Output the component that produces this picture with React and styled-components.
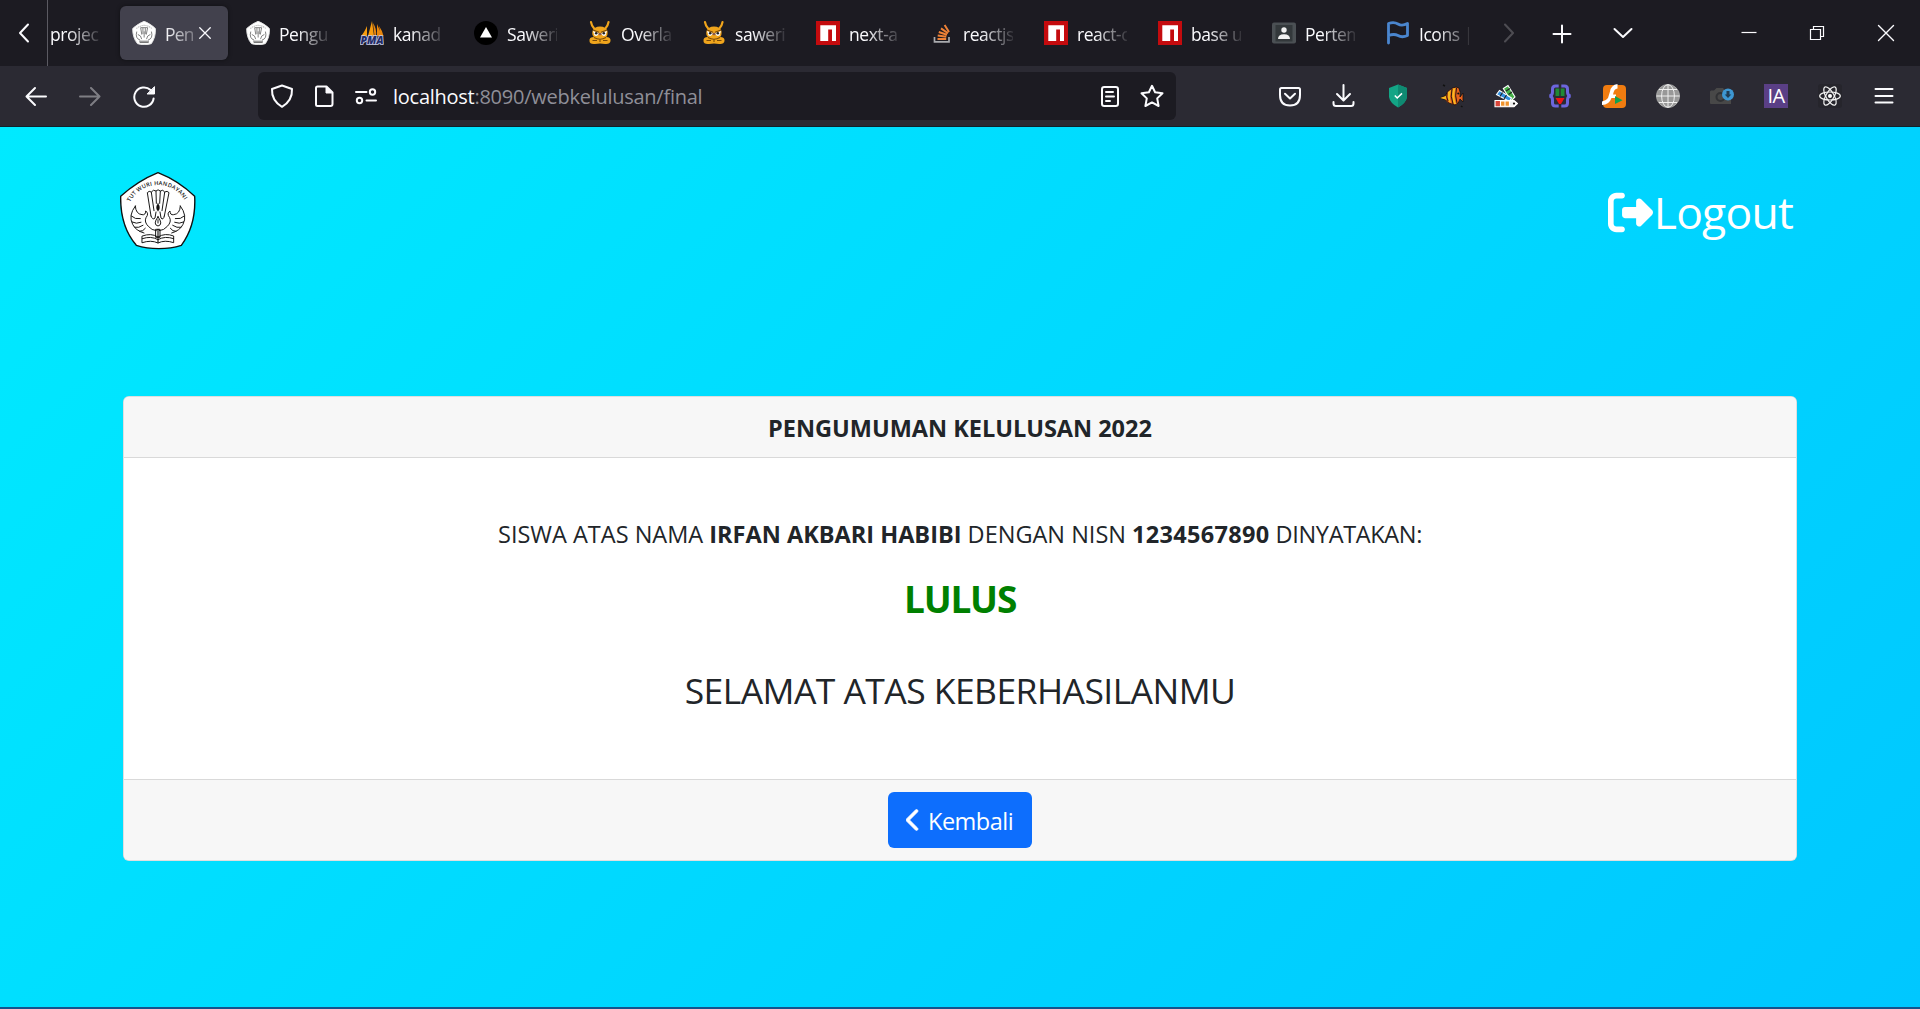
import React from "react";
import styled, { createGlobalStyle } from "styled-components";
import { FaRightFromBracket, FaChevronLeft } from "react-icons/fa6";

const GlobalStyle = createGlobalStyle`
  * { box-sizing: border-box; }
  html, body { margin: 0; padding: 0; overflow: hidden; }
  body { font-family: "Open Sans", "Noto Sans", sans-serif; }
  svg { display: block; flex: none; }
`;

const Screen = styled.div`
  display: flex;
  flex-direction: column;
  width: 1920px;
  height: 1009px;
  border-bottom: 2px solid #14538c;
`;

/* ---------- browser chrome ---------- */

const TabBar = styled.div`
  display: flex;
  height: 66px;
  background: #1c1b22;
  color: #fbfbfe;
`;

const ChromeButton = styled.div`
  display: flex;
  align-items: center;
  justify-content: center;
  flex: none;
  width: ${(p) => p.$w}px;
  height: 66px;
  opacity: ${(p) => (p.$dim ? 0.22 : 1)};
  border-right: ${(p) => (p.$divider ? "1px solid #5b5a62" : "none")};
`;

const Tabs = styled.div`
  display: flex;
  gap: 6px;
  padding: 6px 0;
  flex: none;
`;

const Tab = styled.div`
  display: flex;
  align-items: center;
  width: ${(p) => (p.$cut ? 66 : 108)}px;
  height: 54px;
  padding-left: ${(p) => (p.$cut ? 2 : 12)}px;
  border-radius: 6px;
  background: ${(p) => (p.$active ? "#42414d" : "transparent")};
  box-shadow: ${(p) => (p.$active ? "0 0 4px rgba(0,0,0,0.45)" : "none")};
`;

const Favicon = styled.div`
  width: 24px;
  height: 24px;
  margin-right: 9px;
  flex: none;
`;

const TabTitle = styled.span`
  width: ${(p) => (p.$active ? 28 : 50)}px;
  flex: none;
  overflow: hidden;
  white-space: nowrap;
  font-size: 17.5px;
  line-height: 26px;
  letter-spacing: ${(p) => (p.$active ? -0.8 : -0.45)}px;
  padding-top: 1px;
  mask-image: linear-gradient(to right, #000 ${(p) => (p.$active ? "0%" : "35%")}, transparent ${(p) => (p.$active ? "150%" : "108%")});
`;

const TabClose = styled.div`
  margin-left: 6px;
`;

const Spacer = styled.div`
  flex: 1;
`;

const NavBar = styled.div`
  display: flex;
  align-items: center;
  height: 61px;
  padding-bottom: 1px;
  background: #2b2a33;
  border-bottom: 1px solid #10222c;
  color: #fbfbfe;
`;

const NavButton = styled.div`
  display: flex;
  align-items: center;
  justify-content: center;
  width: 54px;
  height: 48px;
  flex: none;
  opacity: ${(p) => (p.$dim ? 0.4 : 1)};
`;

const NavGroup = styled.div`
  display: flex;
  width: ${(p) => p.$w}px;
  padding-left: ${(p) => p.$pad || 0}px;
  flex: none;
`;

const UrlBar = styled.div`
  display: flex;
  align-items: center;
  width: 918px;
  height: 48px;
  border-radius: 6px;
  background: #1c1b22;
  padding: 0 3px;
`;

const UrlIcon = styled.div`
  display: flex;
  justify-content: center;
  width: 42px;
  flex: none;
`;

const UrlText = styled.div`
  flex: 1;
  padding: 3px 0 0 6px;
  font-size: 20px;
  line-height: 30px;
  letter-spacing: -0.26px;
  color: #8f8f98;
  white-space: nowrap;
  b { font-weight: 400; color: #fbfbfe; }
`;

/* ---------- page ---------- */

const Page = styled.main`
  flex: 1;
  background: linear-gradient(135deg, #00eaff 0%, #00c7ff 100%);
  color: #212529;
`;

const Header = styled.header`
  display: flex;
  justify-content: space-between;
  height: 269px;
  padding: 45px 127px 0 120px;
`;

const Logout = styled.a`
  display: flex;
  align-items: center;
  height: 80px;
  color: #fff;
  font-size: 44.5px;
  line-height: 60px;
  svg { width: 45px; height: 45px; }
  span { margin-left: 1px; letter-spacing: -0.8px; }
`;

const Card = styled.section`
  width: 1674px;
  height: 465px;
  margin: 0 auto;
  display: flex;
  flex-direction: column;
  border: 1px solid rgba(0, 0, 0, 0.125);
  border-radius: 6px;
  background: #fff;
  background-clip: border-box;
  overflow: hidden;
  text-align: center;
`;

const CardHeader = styled.h5`
  margin: 0;
  height: 61px;
  background: #f7f7f7;
  border-bottom: 1px solid #d9d9d9;
  font-size: 23.5px;
  font-weight: 700;
  line-height: 62px;
  letter-spacing: -0.02px;
`;

const CardBody = styled.div`
  flex: 1;
  display: flex;
  flex-direction: column;
  align-items: center;
  padding-top: 58px;
`;

const Line = styled.p`
  margin: 0;
  font-size: ${(p) => p.$size}px;
  line-height: ${(p) => p.$lh}px;
  font-weight: ${(p) => (p.$bold ? 700 : 400)};
  color: ${(p) => p.$color || "inherit"};
  letter-spacing: ${(p) => p.$ls || 0}px;
  margin-top: ${(p) => p.$mt || 0}px;
  white-space: nowrap;
`;

const Strong = styled.b`
  letter-spacing: ${(p) => p.$ls || 0}px;
`;

const Verdict = styled.span`
  letter-spacing: -0.35px;
`;

const CardFooter = styled.div`
  display: flex;
  justify-content: center;
  height: 81px;
  padding-top: 12px;
  background: #f7f7f7;
  border-top: 1px solid #d9d9d9;
`;

const BackButton = styled.button`
  display: flex;
  align-items: center;
  width: 144px;
  height: 56px;
  padding: 0 0 0 18px;
  border: 0;
  border-radius: 6px;
  background: #0d6efd;
  color: #fff;
  font-family: inherit;
  font-size: 23.5px;
  line-height: 36px;
  svg { width: 15px; height: 24px; stroke: #fff; stroke-width: 14; }
  span { margin-left: 7px; padding-top: 2px; letter-spacing: -0.5px; }
`;

/* ---------- drawings ---------- */

const Icon = ({ children, size = 24, sw = 2, ...rest }) => (
  <svg width={size} height={size} viewBox="0 0 24 24" fill="none" stroke="currentColor" strokeWidth={sw} strokeLinecap="round" strokeLinejoin="round" {...rest}>
    {children}
  </svg>
);

const PENTAGON = "M174 52 C137 67 94 94 62 123 C61 178 76 232 109 270 C150 283 203 283 244 270 C272 232 287 178 284 123 C254 94 212 67 174 52Z";

const Emblem = () => (
  <svg width="76" height="78" viewBox="60 50 228 234" fill="none" stroke="#111" strokeWidth="2.9" strokeLinecap="round" strokeLinejoin="round">
    <path d={PENTAGON} fill="#fff" strokeWidth="4.2" />
    <path id="motto" d="M90 140 A94 94 0 0 1 258 142" stroke="none" />
    <text fontFamily="Open Sans, sans-serif" fontSize="17" fontWeight="600" fill="#222" stroke="none">
      <textPath href="#motto" textLength="198">TUT WURI HANDAYANI</textPath>
    </text>
    <path d="M153 182 L142 112 Q147 105 154 110 Q160 101 168 107 Q174 100 181 107 Q189 101 194 110 Q202 105 207 112 L193 182" />
    <path d="M154 111 L162 166 M168 108 L169 144 M181 108 L179 144 M194 111 L186 166" />
    <path d="M174 144 Q165 158 174 168 Q183 158 174 144Z" fill="#111" strokeWidth="1" />
    <path d="M153 182 Q158 196 165 188 L168 170 M193 182 Q190 196 183 188 L180 170" />
    <path d="M174 184 Q157 208 174 212 Q191 208 174 184Z M174 193 V203" />
    <path d="M106 152 Q84 181 98 207 Q107 226 132 233 M106 152 Q107 176 126 178 Q137 180 137 167 Q148 174 138 187 Q132 200 145 213 Q155 225 169 226" />
    <path d="M241 152 Q263 181 249 207 Q240 226 215 233 M241 152 Q240 176 221 178 Q210 180 210 167 Q199 174 209 187 Q215 200 202 213 Q192 225 178 226" />
    <path d="M94 182 Q105 193 121 190 M96 200 Q109 207 123 201 M104 216 Q116 219 129 210 M119 228 Q129 229 136 219" />
    <path d="M253 182 Q242 193 226 190 M251 200 Q238 207 224 201 M243 216 Q231 219 218 210 M228 228 Q218 229 211 219" />
    <path d="M127 242 Q153 232 174 245 Q195 232 221 242 V262 Q194 253 174 263 Q153 253 127 262Z M127 250 Q153 241 174 253 Q195 241 221 250 M168 222 H180 V246 H168Z" />
    <path d="M174 222 V262" strokeWidth="3.4" />
  </svg>
);

const SchoolFavicon = () => (
  <svg width="24" height="24" viewBox="57 49 231 234" fill="none" stroke="#777" strokeWidth="9">
    <path d={PENTAGON} fill="#fff" stroke="#e8e8e8" />
    <path d="M98 122 Q174 62 250 122" stroke="#bbb" strokeWidth="11" strokeDasharray="12 7" />
    <path d="M151 182 L140 114 H208 L194 182 M162 116 V176 M185 116 V176 M174 150 V210" />
    <path d="M102 152 Q84 220 135 235 M245 152 Q263 220 212 235 M112 180 Q145 188 150 226 M235 180 Q202 188 197 226" />
    <path d="M126 246 H221 M130 259 H218" stroke="#666" />
  </svg>
);

const PmaFavicon = () => (
  <svg width="24" height="24" viewBox="0 0 24 24">
    <path d="M1 15 Q4 12 7 5 L7 15Z M8 15 L12 0 L14 15Z" fill="#f89c0e" />
    <path d="M13 2 Q17 8 16 15 H14.5Z M17 3 L20 10 L19 5 Q22 9 23.5 15 H17Z" fill="#e8860c" />
    <text x="0.5" y="23.3" fontFamily="Open Sans, sans-serif" fontSize="10" fontStyle="italic" fontWeight="800" fill="#232c66" stroke="#c9cdea" strokeWidth="1.6" paintOrder="stroke" textLength="23" lengthAdjust="spacingAndGlyphs">PMA</text>
  </svg>
);

const VercelFavicon = () => (
  <svg width="24" height="24" viewBox="0 0 24 24">
    <circle cx="12" cy="12" r="12" fill="#000" />
    <path d="M12 6 L18 16.5 H6Z" fill="#fff" />
  </svg>
);

const BearFavicon = () => (
  <svg width="24" height="24" viewBox="0 0 24 24">
    <path d="M3 1.2 Q3.5 5 6.5 8 M20.5 1.2 Q20 5 17 8" stroke="#f0a51c" strokeWidth="2.2" strokeLinecap="round" fill="none" />
    <path d="M12 5.5 Q18 5.5 19.5 10 Q20 15 18 16 Q23 16 22.5 20 Q22 23.5 17 23 Q12 22 7 23 Q1.5 23.5 1.5 20 Q1 16 6 16 Q3.5 14 4.5 10 Q6 5.5 12 5.5Z" fill="#f0a51c" />
    <path d="M5 10 L11 12 Q10 16 6.5 14.5Z M19 10 L13 12 Q14 16 17.5 14.5Z" fill="#fff" />
    <circle cx="8.2" cy="12.3" r="1.3" fill="#222" />
    <circle cx="15.8" cy="12.3" r="1.3" fill="#222" />
    <path d="M5 9 L11 11.2 M19 9 L13 11.2 M6 16.5 Q12 20 18 16.5 M4.5 19.5 H9 M15 19.5 H19.5 M12 18 V21" stroke="#7a4a08" strokeWidth="1.1" fill="none" />
    <ellipse cx="12" cy="13" rx="1.6" ry="1.3" fill="#8a5a4a" />
  </svg>
);

const NpmFavicon = () => (
  <svg width="24" height="24" viewBox="0 0 24 24">
    <rect width="24" height="24" fill="#c40b0e" />
    <path d="M4.3 4.3 H20 V20 H16 V8.5 H12.2 V20 H4.3Z" fill="#fff" />
  </svg>
);

const StackFavicon = () => (
  <svg width="24" height="24" viewBox="0 0 24 24" fill="none">
    <path d="M4.5 16 V20.8 H19 V16" stroke="#a9abae" strokeWidth="1.7" />
    <path d="M7.5 18 H16.2 M7.7 14.6 L16.3 15.8 M8.8 11 L17 13.8 M11 7.4 L18 12.3 M14.6 4 L19 11" stroke="#ef8236" strokeWidth="2" />
  </svg>
);

const ContactFavicon = () => (
  <svg width="24" height="24" viewBox="0 0 24 24">
    <rect x="0" y="1.5" width="24" height="21" rx="2" fill="#4b5054" />
    <rect x="3.5" y="4" width="17" height="16.5" fill="#33383b" />
    <circle cx="12" cy="9" r="2.7" fill="#f1f1f1" />
    <path d="M6 18 Q6 13.2 12 13.2 Q18 13.2 18 18Z" fill="#f1f1f1" />
  </svg>
);

const FlagFavicon = () => (
  <svg width="24" height="24" viewBox="0 0 24 24" fill="none" stroke="#4a86cf" strokeWidth="2.8" strokeLinejoin="round" strokeLinecap="round">
    <path d="M2.5 22 V2.5 Q8 .5 12 3 Q16 5.5 21.5 2.5 V14.5 Q16 17 12 14.5 Q8 12.5 2.5 14.5" />
  </svg>
);

const AdguardIcon = () => (
  <svg width="24" height="24" viewBox="0 0 24 24">
    <path d="M12 .5 L21 4 V13 Q20 19 12 23.5 Q4 19 3 13 V4Z" fill="#13a586" />
    <path d="M12 .5 L21 4 V13 Q20 19 12 23.5Z" fill="#0f8a72" />
    <path d="M8.8 11.5 L11.2 14 L16 9.4" fill="none" stroke="#fff" strokeWidth="1.5" />
  </svg>
);

const FishIcon = () => (
  <svg width="24" height="24" viewBox="0 0 24 24">
    <path d="M0 14 L5 12 Q9 4 16 3 L19 4 Q21 9 20 13 L23 9 V18 L20 15 Q19 20 15 21 Q8 20 5 15.5Z" fill="#e8601c" stroke="#111" strokeWidth=".8" />
    <path d="M0 14 L6 12 V15.5Z M8 8 Q7 13 9 18 L11 19 Q9 13 11 6Z M13 4.5 Q11 12 14 20 L16 20 Q13 12 15.5 4Z" fill="#f9b91f" />
    <path d="M7 9 Q6 13 8 17 M12 5 Q10 12 13 20 M16.5 4 Q14.5 12 17 19" stroke="#111" strokeWidth=".9" fill="none" />
    <circle cx="18.3" cy="9.5" r="1.1" fill="#111" />
    <path d="M3 1 L5 2 M21 22 L22.5 23" stroke="#111" strokeWidth="1.5" />
  </svg>
);

const PaletteIcon = () => (
  <svg width="24" height="24" viewBox="0 0 24 24" stroke="#fff" strokeWidth="1.1">
    <path d="M9.3 4.5 L14 1.5 L21 13 L17 17Z" fill="#43b047" />
    <path d="M2.5 10.5 L5.5 6.5 L17.5 14 L15.5 17.5Z" fill="#2f8fe0" />
    <path d="M1 16.5 H20 L23.5 19.5 L20 22.8 H1Z" fill="#d9463a" />
    <path d="M6.5 17 H11 V22.2 H6.5Z M11 17 H15.5 V22.2 H11Z" fill="#f0922b" />
    <path d="M15.5 17 H20 L23 19.5 L20 22.2 H15.5Z" fill="#eee" />
    <circle cx="20" cy="19.6" r="1.1" fill="#111" stroke="none" />
    <path d="M12 7 L16 4.5 M14.5 10.5 L18 8 M6 12.5 L8.5 8.5 M10 15 L12.5 11" stroke="#222" />
  </svg>
);

const BracesIcon = () => (
  <svg width="24" height="24" viewBox="0 0 24 24" fill="none">
    <path d="M10.7 2 H7.5 Q4.5 2 4.5 5 V8 Q4.5 11.5 1.5 12 Q4.5 12.5 4.5 16 V19 Q4.5 22 7.5 22 H10.7 M13.3 2 H16.5 Q19.5 2 19.5 5 V8 Q19.5 11.5 22.5 12 Q19.5 12.5 19.5 16 V19 Q19.5 22 16.5 22 H13.3" stroke="#6c66dd" strokeWidth="3" />
    <path d="M7.5 4.5 H11.3 V12 H7.5Z M12.7 4.5 H16.5 V12 H12.7Z" fill="#1f8a35" />
    <path d="M7.5 14 H16.5 L13 20 H11Z" fill="#ef1414" />
  </svg>
);

const FlashIcon = () => (
  <svg width="24" height="24" viewBox="0 0 24 24">
    <rect x="1" y="1" width="23" height="23" rx="4" fill="#f07c10" />
    <path d="M15.5 0 Q9 1 8 7.5 L6 14 Q4 17 0 17.5 V21 Q7 21 9.5 14 H14 V10.5 H11 Q12 4.5 15.5 4.5Z" fill="#fff" />
    <path d="M13 12 L20.5 16.2 L13 20Z" fill="#12a150" />
  </svg>
);

const GlobeIcon = () => (
  <svg width="24" height="24" viewBox="0 0 24 24" fill="none" stroke="#efefef" strokeWidth="1">
    <circle cx="12" cy="12" r="11.5" fill="#989898" stroke="#a6a6a6" />
    <ellipse cx="12" cy="12" rx="6.4" ry="11.3" />
    <path d="M12 .5 V23.5 M.5 12 H23.5 M3 5.5 H21 M3 18.5 H21" />
  </svg>
);

const CameraIcon = () => (
  <svg width="24" height="24" viewBox="0 0 24 24">
    <path d="M1 6.5 H4 L6.5 4 H13 L15 6.5 H21 V20 H1 Q0 20 0 19 V7.5Z" fill="#484848" />
    <circle cx="10.5" cy="13" r="4" fill="none" stroke="#303134" strokeWidth="2" />
    <circle cx="18" cy="10.5" r="6" fill="#3d97d3" />
    <path d="M16.5 7 H19.5 V10.5 H21.3 L18 14 L14.7 10.5 H16.5Z" fill="#1f3d55" />
  </svg>
);

const IaBadge = styled.div`
  width: 24px;
  height: 24px;
  background: #5a3f86;
  color: #fff;
  font-size: 20px;
  line-height: 24px;
  text-align: center;
  letter-spacing: -0.6px;
`;

const ReactIcon = () => (
  <svg width="24" height="24" viewBox="0 0 24 24" fill="none" stroke="#f4f4f4" strokeWidth="1.2">
    <rect width="24" height="24" rx="3" fill="#26252c" stroke="none" />
    <ellipse cx="12" cy="12" rx="10.3" ry="4" />
    <ellipse cx="12" cy="12" rx="10.3" ry="4" transform="rotate(60 12 12)" />
    <ellipse cx="12" cy="12" rx="10.3" ry="4" transform="rotate(120 12 12)" />
    <circle cx="12" cy="12" r="2" fill="#fff" stroke="none" />
  </svg>
);

const TABS = [
  { title: "Pen", icon: SchoolFavicon, active: true },
  { title: "Pengu", icon: SchoolFavicon },
  { title: "kanad", icon: PmaFavicon },
  { title: "Saweri", icon: VercelFavicon },
  { title: "Overla", icon: BearFavicon },
  { title: "saweri", icon: BearFavicon },
  { title: "next-a", icon: NpmFavicon },
  { title: "reactjs", icon: StackFavicon },
  { title: "react-c", icon: NpmFavicon },
  { title: "base u", icon: NpmFavicon },
  { title: "Pertem", icon: ContactFavicon },
  { title: "Icons |", icon: FlagFavicon },
];

const EXTENSIONS = [AdguardIcon, FishIcon, PaletteIcon, BracesIcon, FlashIcon, GlobeIcon, CameraIcon];

export default function App() {
  return (
    <Screen>
      <GlobalStyle />
      <TabBar>
        <ChromeButton $w={48} $divider>
          <Icon><path d="M16 3.5 L8 12 L16 20.5" /></Icon>
        </ChromeButton>
        <Tabs>
          <Tab $cut><TabTitle>projec</TabTitle></Tab>
          {TABS.map(({ title, icon: Fav, active }, i) => (
            <Tab key={i} $active={active}>
              <Favicon><Fav /></Favicon>
              <TabTitle $active={active}>{title}</TabTitle>
              {active && (
                <TabClose>
                  <Icon size={12} sw={2.6}><path d="M1.5 1.5 L22.5 22.5 M22.5 1.5 L1.5 22.5" /></Icon>
                </TabClose>
              )}
            </Tab>
          ))}
        </Tabs>
        <ChromeButton $w={53} $dim><Icon><path d="M8 3.5 L16 12 L8 20.5" /></Icon></ChromeButton>
        <ChromeButton $w={54}><Icon><path d="M12 4.5 V21.5 M3.5 13 H20.5" /></Icon></ChromeButton>
        <ChromeButton $w={67}><Icon><path d="M3.5 8 L12 16 L20.5 8" /></Icon></ChromeButton>
        <Spacer />
        <ChromeButton $w={69}><Icon sw={1.2}><path d="M4.5 11.5 H19.5" strokeLinecap="butt" /></Icon></ChromeButton>
        <ChromeButton $w={68}><Icon sw={1.2}><path d="M5.5 8.5 H15.5 V18.5 H5.5Z M8.5 8.5 V5.5 H18.5 V15.5 H15.5" strokeLinejoin="miter" /></Icon></ChromeButton>
        <ChromeButton $w={69}><Icon sw={1.4}><path d="M4.5 4.5 L19.5 19.5 M19.5 4.5 L4.5 19.5" /></Icon></ChromeButton>
      </TabBar>

      <NavBar>
        <NavGroup $w={258} $pad={9}>
          <NavButton><Icon><path d="M22 12.5 H2.5 M11 4 L2.5 12.5 L11 21" /></Icon></NavButton>
          <NavButton $dim><Icon><path d="M2 12.5 H21.5 M13 4 L21.5 12.5 L13 21" /></Icon></NavButton>
          <NavButton>
            <Icon>
              <path d="M21.6 14.5 A9.7 9.7 0 1 1 18.6 6" />
              <path d="M22.5 3 V10 H15.5Z" fill="currentColor" strokeWidth="1" />
            </Icon>
          </NavButton>
        </NavGroup>
        <UrlBar>
          <UrlIcon><Icon><path d="M12 1.5 L22 5 Q22.6 16.5 12 22.8 Q1.4 16.5 2 5Z" /></Icon></UrlIcon>
          <UrlIcon><Icon><path d="M5.5 2.5 H14.5 L20.5 8.5 V20 Q20.5 22 18.5 22 H5.5 Q4 22 4 20.5 V4 Q4 2.5 5.5 2.5Z" /><path d="M14 2.5 V9 H20.5Z" fill="currentColor" strokeWidth="1" /></Icon></UrlIcon>
          <UrlIcon><Icon><path d="M2 8 H12.5 M22 16.5 H12.5" /><circle cx="18.5" cy="8" r="2.7" /><circle cx="5.5" cy="16.5" r="2.7" /></Icon></UrlIcon>
          <UrlText><b>localhost</b>:8090/webkelulusan/final</UrlText>
          <UrlIcon><Icon><rect x="4" y="3" width="16" height="19" rx="2.2" /><path d="M8 8 H15 M8 12.5 H16 M8 17 H12" /></Icon></UrlIcon>
          <UrlIcon><Icon><path d="M12 1.8 L15.1 8.3 L22.5 9.3 L17.2 14.4 L18.6 22 L12 18.4 L5.4 22 L6.8 14.4 L1.5 9.3 L8.9 8.3Z" /></Icon></UrlIcon>
        </UrlBar>
        <Spacer />
        <NavGroup $w={657}>
          <NavButton><Icon><path d="M3.5 4 H20.5 Q22 4 22 5.5 V11 Q22 21.5 12 21.5 Q2 21.5 2 11 V5.5 Q2 4 3.5 4Z M7 9.8 L12 14.5 L17 9.8" /></Icon></NavButton>
          <NavButton><Icon><path d="M11.5 1 V16 M5 10 L11.5 16.5 L18 10 M1.5 18 V19.5 Q1.5 22 4 22 H19 Q21.5 22 21.5 19.5 V18" /></Icon></NavButton>
          {EXTENSIONS.map((Ext, i) => (
            <NavButton key={i}><Ext /></NavButton>
          ))}
          <NavButton><IaBadge>IA</IaBadge></NavButton>
          <NavButton><ReactIcon /></NavButton>
          <NavButton><Icon><path d="M3.5 5 H20.5 M3.5 12 H20.5 M3.5 18.5 H20.5" /></Icon></NavButton>
        </NavGroup>
      </NavBar>

      <Page>
        <Header>
          <Emblem />
          <Logout>
            <FaRightFromBracket />
            <span>Logout</span>
          </Logout>
        </Header>
        <Card>
          <CardHeader>PENGUMUMAN KELULUSAN 2022</CardHeader>
          <CardBody>
            <Line $size={23.5} $lh={36}>
              SISWA ATAS NAMA <Strong>IRFAN AKBARI HABIBI</Strong> DENGAN NISN{" "}
              <Strong $ls={0.3}>1234567890</Strong> <Verdict>DINYATAKAN:</Verdict>
            </Line>
            <Line $size={37} $lh={54} $mt={20} $bold $color="#008000" $ls={-1.2}>LULUS</Line>
            <Line $size={35.5} $lh={54} $mt={37} $ls={-0.57}>SELAMAT ATAS KEBERHASILANMU</Line>
          </CardBody>
          <CardFooter>
            <BackButton>
              <FaChevronLeft />
              <span>Kembali</span>
            </BackButton>
          </CardFooter>
        </Card>
      </Page>
    </Screen>
  );
}
